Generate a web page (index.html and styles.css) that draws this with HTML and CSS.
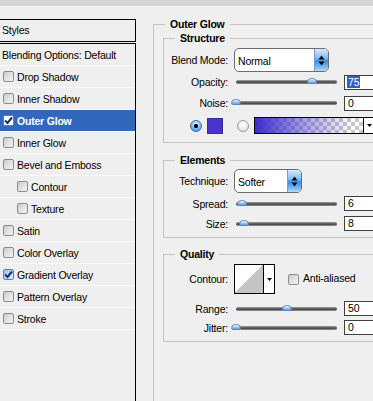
FILE: index.html
```html
<!DOCTYPE html>
<html>
<head>
<meta charset="utf-8">
<title>Layer Style</title>
<link rel="stylesheet" href="styles.css">
</head>
<body>
<div class="titlebar"></div>
<div class="main">
  <aside class="left">
    <div class="styles-head">Styles</div>
    <ul class="list">
      <li class="item blend">Blending Options: Default</li>
      <li class="item"><span class="cb"></span>Drop Shadow</li>
      <li class="item"><span class="cb"></span>Inner Shadow</li>
      <li class="item active"><span class="cb on"><svg width="9" height="9" viewBox="0 0 9 9"><path d="M1 4.5 L3.5 7 L8 1.5" fill="none" stroke="#12307a" stroke-width="2"/></svg></span>Outer Glow</li>
      <li class="item"><span class="cb"></span>Inner Glow</li>
      <li class="item"><span class="cb"></span>Bevel and Emboss</li>
      <li class="item nested"><span class="cb"></span>Contour</li>
      <li class="item nested"><span class="cb"></span>Texture</li>
      <li class="item"><span class="cb"></span>Satin</li>
      <li class="item"><span class="cb"></span>Color Overlay</li>
      <li class="item"><span class="cb on blue"><svg width="9" height="9" viewBox="0 0 9 9"><path d="M1 4.5 L3.5 7 L8 1.5" fill="none" stroke="#12307a" stroke-width="2"/></svg></span>Gradient Overlay</li>
      <li class="item"><span class="cb"></span>Pattern Overlay</li>
      <li class="item"><span class="cb"></span>Stroke</li>
    </ul>
  </aside>
  <section class="right">
    <fieldset class="grp outer">
      <legend>Outer Glow</legend>

      <fieldset class="grp inner structure">
        <legend>Structure</legend>
        <div class="row r-blend">
          <span class="lbl">Blend Mode:</span>
          <div class="select sel-blend"><span class="sel-text">Normal</span><span class="spin"><svg width="7" height="11" viewBox="0 0 7 11"><path d="M3.5 0.5 L6.5 4.5 H0.5Z M0.5 6.5 H6.5 L3.5 10.5Z" fill="#000"/></svg></span></div>
        </div>
        <div class="row r-opacity">
          <span class="lbl">Opacity:</span>
          <div class="slider"><span class="thumb" style="left:75%"></span></div>
          <div class="num"><span class="hl">75</span></div>
        </div>
        <div class="row r-noise">
          <span class="lbl">Noise:</span>
          <div class="slider"><span class="thumb" style="left:0%"></span></div>
          <div class="num">0</div>
        </div>
        <div class="row r-color">
          <span class="radio on"></span>
          <span class="swatch"></span>
          <span class="radio off"></span>
          <div class="gradient"><span class="gprev"></span><span class="gdd"><svg width="5" height="3" viewBox="0 0 5 3"><path d="M0 0H5L2.5 3Z" fill="#000"/></svg></span></div>
        </div>
      </fieldset>

      <fieldset class="grp inner elements">
        <legend>Elements</legend>
        <div class="row r-tech">
          <span class="lbl">Technique:</span>
          <div class="select sel-tech"><span class="sel-text">Softer</span><span class="spin"><svg width="7" height="11" viewBox="0 0 7 11"><path d="M3.5 0.5 L6.5 4.5 H0.5Z M0.5 6.5 H6.5 L3.5 10.5Z" fill="#000"/></svg></span></div>
        </div>
        <div class="row r-spread">
          <span class="lbl">Spread:</span>
          <div class="slider"><span class="thumb" style="left:6%"></span></div>
          <div class="num">6</div>
        </div>
        <div class="row r-size">
          <span class="lbl">Size:</span>
          <div class="slider"><span class="thumb" style="left:8%"></span></div>
          <div class="num">8</div>
        </div>
      </fieldset>

      <fieldset class="grp inner quality">
        <legend>Quality</legend>
        <div class="row r-contour">
          <span class="lbl">Contour:</span>
          <div class="contour"><span class="curve"></span><span class="cdd"><svg width="5" height="3" viewBox="0 0 5 3"><path d="M0 0H5L2.5 3Z" fill="#000"/></svg></span></div>
          <span class="cb anti"></span>
          <span class="anti-text">Anti-aliased</span>
        </div>
        <div class="row r-range">
          <span class="lbl">Range:</span>
          <div class="slider"><span class="thumb" style="left:50%"></span></div>
          <div class="num">50</div>
        </div>
        <div class="row r-jitter">
          <span class="lbl">Jitter:</span>
          <div class="slider"><span class="thumb" style="left:0%"></span></div>
          <div class="num">0</div>
        </div>
      </fieldset>
    </fieldset>
  </section>
</div>
</body>
</html>
```

FILE: styles.css
```css
* { box-sizing: border-box; }
html, body {
  margin: 0;
  padding: 0;
  width: 373px;
  height: 401px;
  overflow: hidden;
}
body {
  background: #efefef;
  font-family: "Liberation Sans", Arial, sans-serif;
  font-size: 10.5px;
  letter-spacing: -0.2px;
  color: #000;
}
.titlebar {
  height: 7px;
  background: #d5d5d5;
  border-bottom: 1px solid #f7f7f7;
}
.main {
  display: flex;
  height: 394px;
  overflow: hidden;
}

/* left panel */
.left {
  width: 136px;
  flex: none;
  padding-top: 12px;
  display: flex;
  flex-direction: column;
}
.styles-head {
  height: 23px;
  border: 1px solid #000;
  border-left: none;
  line-height: 21px;
  padding-left: 2px;
}
.list {
  margin: 1px 0 0;
  padding: 0;
  list-style: none;
  border-top: 1px solid #000;
  border-right: 1px solid #000;
  flex: 1;
}
.item {
  height: 22px;
  border-bottom: 1px solid #fbfbfb;
  display: flex;
  align-items: center;
  padding-left: 3px;
  white-space: nowrap;
}
.item.blend { padding-left: 2px; }
.item.nested { padding-left: 17px; }
.item.active {
  background: #3167bd;
  color: #fff;
  font-weight: bold;
}
.cb {
  width: 11px;
  height: 11px;
  flex: none;
  margin-right: 3px;
  border: 1px solid #8c8c8c;
  border-radius: 2px;
  background: linear-gradient(135deg, #cdcdcd, #f4f4f4);
  display: flex;
  align-items: center;
  justify-content: center;
}
.cb.on { background: #fff; border-color: #6a7f9c; }
.cb.on.blue { background: linear-gradient(135deg, #9cc2f0, #dceaff); }

/* right panel */
.right {
  flex: 1;
  min-width: 0;
  overflow: hidden;
  padding: 11px 0 0 17px;
}
.grp {
  margin: 0;
  padding: 0;
  min-width: 0;
  border: 1px solid #c3c3c3;
}
.grp > legend {
  margin-left: 11px;
  padding: 0 5px;
  font-weight: bold;
  line-height: 13px;
}
.outer {
  width: 300px;
  height: 420px;
}
.inner {
  width: 260px;
  margin-left: 9px;
}
.structure { margin-top: 1px; padding-top: 3px; padding-bottom: 8px; }
.elements { margin-top: 11px; padding-top: 2px; padding-bottom: 6px; }
.quality { margin-top: 10px; padding-top: 3px; padding-bottom: 6px; }

.row {
  display: flex;
  align-items: center;
  white-space: nowrap;
}
.lbl {
  width: 64px;
  flex: none;
  text-align: right;
}
.r-blend, .r-tech { height: 24px; }
.r-opacity { height: 16px; margin-top: 2px; }
.r-noise { height: 16px; margin-top: 5px; }
.r-color { height: 17px; margin-top: 6px; }
.r-spread { height: 15px; margin-top: 3px; }
.r-size { height: 15px; margin-top: 5px; }
.r-contour { height: 30px; }
.r-range { height: 15px; margin-top: 7px; }
.r-jitter { height: 15px; margin-top: 4px; }

/* dropdowns */
.select {
  margin-left: 6px;
  height: 24px;
  border: 1px solid #6c6c6c;
  border-radius: 5px;
  background: #fff;
  display: flex;
  align-items: stretch;
  overflow: hidden;
}
.sel-blend { width: 95px; }
.sel-tech { width: 68px; }
.sel-text {
  flex: 1;
  padding-left: 3px;
  padding-top: 1px;
  display: flex;
  align-items: center;
}
.spin {
  width: 14px;
  flex: none;
  border-left: 1px solid #6f9bd6;
  background: linear-gradient(#d6ecff, #86bdf3 40%, #3f8ce2 55%, #7fbdf6 85%, #b8dcff);
  display: flex;
  align-items: center;
  justify-content: center;
}

/* sliders */
.slider {
  position: relative;
  margin-left: 8px;
  width: 101px;
  height: 4px;
  flex: none;
  border-radius: 2px;
  background: linear-gradient(#a3a3a3, #555 45%, #4a4a4a 60%, #9b9b9b);
}
.thumb {
  position: absolute;
  top: -2px;
  width: 10px;
  height: 6px;
  transform: translateX(-50%);
  border: 1px solid #5c87c2;
  border-radius: 5px 5px 2px 2px;
  background: linear-gradient(#eef7ff, #a9cdf4 50%, #5f98de);
}
.num {
  margin-left: 7px;
  width: 40px;
  height: 15px;
  flex: none;
  border: 1px solid #3f3f3f;
  background: #fff;
  padding-left: 3px;
  line-height: 13px;
}
.hl {
  background: #2f62c0;
  color: #fff;
  padding: 0 1px;
  margin-left: -1px;
}

/* color row */
.radio {
  width: 12px;
  height: 12px;
  border-radius: 50%;
  flex: none;
}
.radio.on {
  margin-left: 26px;
  border: 1px solid #3b6cb0;
  background:
    radial-gradient(circle, #000 0 1.8px, transparent 2.4px),
    radial-gradient(circle at 50% 30%, #eef8ff, #6fb3f2 60%, #2f7fd8);
}
.radio.off {
  margin-left: 14px;
  border: 1px solid #9a9a9a;
  background: radial-gradient(circle at 50% 30%, #fff, #dcdcdc);
}
.swatch {
  margin-left: 5px;
  width: 16px;
  height: 16px;
  flex: none;
  background: #4934cc;
  border: 1px solid #3a2a9c;
}
.gradient {
  margin-left: 5px;
  width: 130px;
  height: 17px;
  flex: none;
  border: 1px solid #000;
  display: flex;
  background: #fff;
}
.gprev {
  width: 109px;
  flex: none;
  background:
    linear-gradient(to right, rgba(60, 44, 205, 1), rgba(60, 44, 205, 0.45) 45%, rgba(60, 44, 205, 0) 92%),
    conic-gradient(#c8c8c8 25%, #fff 0 50%, #c8c8c8 0 75%, #fff 0);
  background-size: 100% 100%, 8px 8px;
  border-right: 1px solid #000;
}
.gdd {
  width: 10px;
  display: flex;
  align-items: center;
  justify-content: center;
}

/* contour */
.contour {
  margin-left: 6px;
  width: 41px;
  height: 30px;
  flex: none;
  border: 1px solid #000;
  background: #fff;
  display: flex;
}
.curve {
  width: 29px;
  flex: none;
  background: linear-gradient(to bottom right, #fff 50%, #c4c4c4 50%);
  border-right: 1px solid #000;
}
.cdd {
  flex: 1;
  display: flex;
  align-items: center;
  justify-content: center;
}
.cb.anti {
  margin-left: 13px;
  margin-right: 4px;
}
.anti-text { margin-top: -3px; }
```
